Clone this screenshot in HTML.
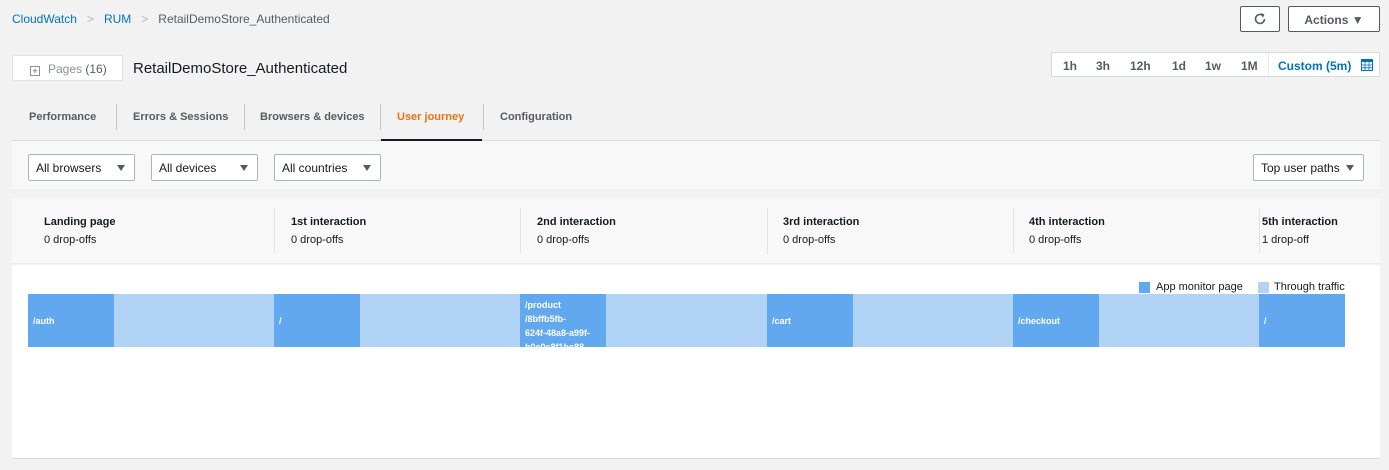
<!DOCTYPE html>
<html><head><meta charset="utf-8"><style>
*{box-sizing:border-box;margin:0;padding:0}
body{width:1389px;height:470px;background:#f2f2f2;font-family:"Liberation Sans",Arial,sans-serif;position:relative;overflow:hidden;color:#16191f}
.a{position:absolute}
.bc{top:12px;left:12px;font-size:12px;color:#545b64}
.bc a{color:#0073bb;text-decoration:none}
.bc .s{color:#aab7b8;margin:0 10px}
.btn{background:#fff;border:1px solid #545b64;border-radius:2px;font-weight:bold;font-size:12px;color:#545b64;text-align:center}
.tab{top:111px;font-size:11px;font-weight:bold;color:#545b64}
.sep{top:104px;width:1px;height:26px;background:#c6c6cd}
.sel{top:154px;height:27px;background:#fff;border:1px solid #aab7b8;border-radius:2px;font-size:12px;color:#16191f;padding:6px 7px;}
.sel i{position:absolute;right:9px;top:10px;width:0;height:0;border-left:4.5px solid transparent;border-right:4.5px solid transparent;border-top:6px solid #545b64}
.hd{top:216px;font-size:11px;font-weight:bold}
.dr{top:234px;font-size:11px}
.dv{top:208px;width:1px;height:46px;background:#e1e4e4}
.seg{top:294px;height:53px}
.d{background:#62a8ee}.l{background:#b1d3f5}
.seg span{position:absolute;left:5px;top:22px;font-size:9px;font-weight:bold;color:#fff}
</style></head><body>
<div class="a bc"><a>CloudWatch</a><span class="s">&gt;</span><a>RUM</a><span class="s">&gt;</span>RetailDemoStore_Authenticated</div>
<div class="a btn" style="left:1240px;top:6px;width:40px;height:26px;padding-top:5px"><svg width="14" height="14" viewBox="0 0 14 14"><path d="M11.5 7A4.5 4.5 0 1 1 9.5 3.2" fill="none" stroke="#545b64" stroke-width="1.6"/><path d="M8 1L11.5 2.5L9.8 6Z" fill="#545b64"/></svg></div>
<div class="a btn" style="left:1288px;top:6px;width:92px;height:26px;padding-top:6px">Actions &#9660;</div>
<div class="a" style="left:12px;top:55px;width:111px;height:26px;background:#fff;border:1px solid #e1e4e4;font-size:12px;color:#545b64;padding:6px 0 0 17px"><span style="display:inline-block;width:10px;height:10px;border:1px solid #879196;font-size:9px;line-height:8px;text-align:center;vertical-align:-1px;margin-right:8px">+</span><span style="color:#879196">Pages</span> (16)</div>
<div class="a" style="left:133px;top:60px;font-size:15px;color:#16191f">RetailDemoStore_Authenticated</div>
<div class="a" style="left:1051px;top:52px;width:329px;height:25px;background:#fff;border:1px solid #d5dbdb;font-size:12px;font-weight:bold;color:#545b64">
<span class="a" style="left:11px;top:6px">1h</span><span class="a" style="left:44px;top:6px">3h</span><span class="a" style="left:78px;top:6px">12h</span><span class="a" style="left:120px;top:6px">1d</span><span class="a" style="left:153px;top:6px">1w</span><span class="a" style="left:189px;top:6px">1M</span>
<span class="a" style="left:216px;top:0;width:1px;height:23px;background:#eaeded"></span>
<span class="a" style="left:226px;top:6px;color:#0073bb">Custom (5m)</span>
<svg class="a" style="left:309px;top:6px" width="12" height="12" viewBox="0 0 12 12"><rect x="0.5" y="0.5" width="11" height="11" fill="none" stroke="#0073bb"/><rect x="0.5" y="0.5" width="11" height="2.5" fill="#0073bb"/><path d="M4 3V11.5M8 3V11.5M0.5 6H11.5M0.5 8.8H11.5" stroke="#0073bb" stroke-width="0.8"/></svg></div>
<div class="a tab" style="left:29px">Performance</div><div class="a sep" style="left:116px"></div>
<div class="a tab" style="left:133px">Errors &amp; Sessions</div><div class="a sep" style="left:244px"></div>
<div class="a tab" style="left:260px">Browsers &amp; devices</div><div class="a sep" style="left:380px"></div>
<div class="a tab" style="left:397px;color:#ec7211">User journey</div><div class="a sep" style="left:483px"></div>
<div class="a tab" style="left:500px">Configuration</div>
<div class="a" style="left:12px;top:140px;width:1368px;height:1px;background:#d5dbdb"></div>
<div class="a" style="left:381px;top:139px;width:101px;height:2px;background:#16191f"></div>
<div class="a" style="left:12px;top:141px;width:1368px;height:48px;background:#f8f8f8"></div>
<div class="a sel" style="left:28px;width:107px">All browsers<i></i></div>
<div class="a sel" style="left:151px;width:107px">All devices<i></i></div>
<div class="a sel" style="left:274px;width:107px">All countries<i></i></div>
<div class="a sel" style="left:1253px;width:111px">Top user paths<i></i></div>
<div class="a" style="left:12px;top:198px;width:1368px;height:66px;background:#f8f8f8;border-bottom:1px solid #eaeded"></div>
<div class="a" style="left:12px;top:265px;width:1368px;height:194px;background:#fff;border-bottom:1px solid #d5dbdb"></div>
<div class="a hd" style="left:44px">Landing page</div><div class="a dr" style="left:44px">0 drop-offs</div>
<div class="a dv" style="left:274px"></div><div class="a hd" style="left:291px">1st interaction</div><div class="a dr" style="left:291px">0 drop-offs</div>
<div class="a dv" style="left:520px"></div><div class="a hd" style="left:537px">2nd interaction</div><div class="a dr" style="left:537px">0 drop-offs</div>
<div class="a dv" style="left:767px"></div><div class="a hd" style="left:783px">3rd interaction</div><div class="a dr" style="left:783px">0 drop-offs</div>
<div class="a dv" style="left:1013px"></div><div class="a hd" style="left:1029px">4th interaction</div><div class="a dr" style="left:1029px">0 drop-offs</div>
<div class="a dv" style="left:1259px"></div><div class="a hd" style="left:1262px">5th interaction</div><div class="a dr" style="left:1262px">1 drop-off</div>
<div class="a d" style="left:1139px;top:282px;width:11px;height:11px"></div><div class="a" style="left:1156px;top:281px;font-size:11px">App monitor page</div>
<div class="a l" style="left:1258px;top:282px;width:11px;height:11px"></div><div class="a" style="left:1274px;top:281px;font-size:11px">Through traffic</div>
<div class="a seg d" style="left:28px;width:86px"><span>/auth</span></div><div class="a seg l" style="left:114px;width:160px"></div>
<div class="a seg d" style="left:274px;width:86px"><span>/</span></div><div class="a seg l" style="left:360px;width:160px"></div>
<div class="a seg d" style="left:520px;width:86px;overflow:hidden"><span style="top:4px;line-height:14px">/product<br>/8bffb5fb-<br>624f-48a8-a99f-<br>b0e0c8f1be88</span></div><div class="a seg l" style="left:606px;width:161px"></div>
<div class="a seg d" style="left:767px;width:86px"><span>/cart</span></div><div class="a seg l" style="left:853px;width:160px"></div>
<div class="a seg d" style="left:1013px;width:86px"><span>/checkout</span></div><div class="a seg l" style="left:1099px;width:160px"></div>
<div class="a seg d" style="left:1259px;width:86px"><span>/</span></div>
</body></html>
